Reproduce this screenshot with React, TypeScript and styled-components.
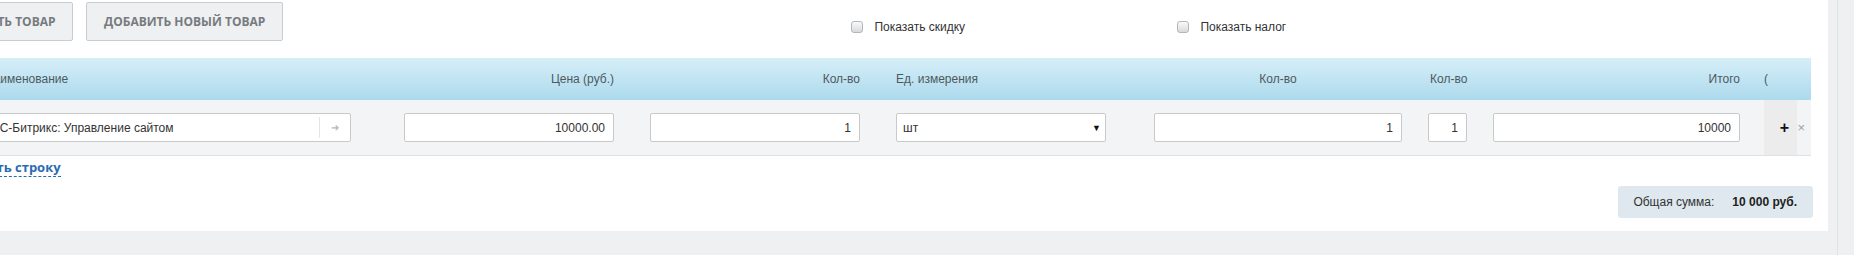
import React from "react";
import styled, { createGlobalStyle } from "styled-components";

const GlobalStyle = createGlobalStyle`
  html, body {
    margin: 0;
    padding: 0;
    background: #eef0f2;
    font-family: "Liberation Sans", Arial, sans-serif;
    font-size: 12px;
    color: #333;
    overflow: hidden;
  }
`;

// page is scrolled horizontally in the screenshot, so the table starts left of the viewport
const COLUMNS = "379px 263px 246px 246px 296px 65px 273px 71px";

const columns = [
  { title: "Наименование", align: "left", pad: 13 },
  { title: "Цена (руб.)", align: "right", pad: 53 },
  { title: "Кол-во", align: "right", pad: 36 },
  { title: "Ед. измерения", align: "left", pad: 36 },
  { title: "Кол-во", align: "center", pad: 48 },
  { title: "Кол-во", align: "left", pad: 28 },
  { title: "Итого", align: "right", pad: 26 },
  { title: "(", align: "left", pad: 24 },
];

const App = () => {
  return (
    <>
      <GlobalStyle />
      <Page>
        <Panel>
          <Inner>
            <TopBar>
              <Buttons>
                <GrayButton $width={136}>Выбрать товар</GrayButton>
                <GrayButton>Добавить новый товар</GrayButton>
              </Buttons>
              <Options>
                <Option $width={326}>
                  <Check type="checkbox" />
                  Показать скидку
                </Option>
                <Option>
                  <Check type="checkbox" />
                  Показать налог
                </Option>
              </Options>
            </TopBar>

            <Table>
              <HeadRow>
                {columns.map((c, i) => (
                  <HeadCell key={i} $align={c.align} $pad={c.pad}>
                    {c.title}
                  </HeadCell>
                ))}
              </HeadRow>

              <BodyRow>
                <Cell $pad={12}>
                  <NameBox>
                    <NameText>1С-Битрикс: Управление сайтом</NameText>
                    <NameArrow>➜</NameArrow>
                  </NameBox>
                </Cell>
                <Cell $pad={53}>
                  <Field value="10000.00" readOnly />
                </Cell>
                <Cell $pad={36}>
                  <Field value="1" readOnly />
                </Cell>
                <Cell $pad={36}>
                  <Select>
                    <span>шт</span>
                    <SelectArrow>▼</SelectArrow>
                  </Select>
                </Cell>
                <Cell $pad={48}>
                  <Field value="1" readOnly />
                </Cell>
                <Cell $pad={26}>
                  <Field value="1" readOnly />
                </Cell>
                <Cell $pad={26}>
                  <Field value="10000" readOnly />
                </Cell>
                <ActionCell>
                  <Actions>
                    <Plus>+</Plus>
                    <Remove>×</Remove>
                  </Actions>
                </ActionCell>
              </BodyRow>
            </Table>

            <AddRow>
              <AddLink>Добавить строку</AddLink>
            </AddRow>

            <TotalRow>
              <TotalBox>
                <span>Общая сумма:</span>
                <b>10 000 руб.</b>
              </TotalBox>
            </TotalRow>
          </Inner>
        </Panel>
        <SideStrip />
      </Page>
    </>
  );
};

export default App;

const Page = styled.div`
width: 1854px;
height: 255px;
display: flex;
align-items: flex-start;
`;

const Panel = styled.div`
width: 1828px;
background: #fff;
overflow: hidden;
padding: 2px 0 13px;
`;

const SideStrip = styled.div`
width: 26px;
height: 255px;
box-sizing: border-box;
border-left: 9px solid #eef0f2;
border-right: 16px solid #eef0f2;
background: #dfe3e6;
`;

const Inner = styled.div`
margin-left: -28px;
width: 1839px;
`;

const TopBar = styled.div`
display: flex;
align-items: flex-start;
height: 56px;
margin-left: -35px;
`;

const Buttons = styled.div`
display: flex;
gap: 13px;
`;

const GrayButton = styled.button<{ $width?: number }>`
height: 39px;
${(p) => (p.$width ? `width: ${p.$width}px;` : "")}
padding: 0 17px;
box-sizing: border-box;
background: #eef0f1;
border: 1px solid #c9cdd0;
border-radius: 2px;
font-family: "Open Sans", sans-serif;
font-weight: 700;
font-size: 12px;
color: #767b80;
text-transform: uppercase;
text-align: right;
white-space: nowrap;
`;

const Options = styled.div`
display: flex;
align-items: center;
margin-left: 568px;
padding-top: 17px;
`;

const Option = styled.label<{ $width?: number }>`
display: flex;
align-items: center;
gap: 11px;
${(p) => (p.$width ? `width: ${p.$width}px;` : "")}
font-size: 12px;
color: #333;
line-height: 16px;
`;

const Check = styled.input`
appearance: none;
margin: 0;
width: 12px;
height: 12px;
border: 1px solid #b3b7ba;
border-radius: 3px;
background: linear-gradient(#fafafa, #d9dadb);
`;

const Table = styled.div`
display: flex;
flex-direction: column;
`;

const HeadRow = styled.div`
display: grid;
grid-template-columns: ${COLUMNS};
height: 42px;
align-items: center;
background: linear-gradient(#d6eef8, #acdaed);
`;

const HeadCell = styled.div<{ $align: string; $pad: number }>`
padding-left: ${(p) => p.$pad}px;
text-align: ${(p) => p.$align};
font-size: 12px;
color: #4e595f;
white-space: nowrap;
`;

const BodyRow = styled.div`
display: grid;
grid-template-columns: ${COLUMNS};
height: 55px;
background: #f3f4f5;
border-bottom: 1px solid #dfe1e3;
`;

const Cell = styled.div<{ $pad: number }>`
display: flex;
align-items: center;
padding-left: ${(p) => p.$pad}px;
`;

const Field = styled.input`
width: 100%;
height: 29px;
box-sizing: border-box;
margin: 0;
border: 1px solid #c9c9c9;
border-radius: 2px;
background: #fff;
padding: 0 8px;
text-align: right;
font-family: "Liberation Sans", Arial, sans-serif;
font-size: 12px;
color: #333;
outline: none;
`;

const NameBox = styled.div`
flex: 1;
height: 29px;
box-sizing: border-box;
display: flex;
align-items: center;
border: 1px solid #c9c9c9;
border-radius: 2px;
background: #fff;
`;

const NameText = styled.span`
flex: 1;
padding-left: 8px;
font-size: 12px;
color: #333;
`;

const NameArrow = styled.span`
width: 30px;
height: 21px;
display: flex;
align-items: center;
justify-content: center;
border-left: 1px solid #e4e4e4;
font-size: 10px;
color: #b9b9b9;
`;

const Select = styled.div`
flex: 1;
height: 29px;
box-sizing: border-box;
display: flex;
align-items: center;
justify-content: space-between;
padding: 0 10px 0 6px;
border: 1px solid #c9c9c9;
border-radius: 2px;
background: #fff;
font-size: 12px;
color: #333;
`;

const SelectArrow = styled.span`
font-size: 9px;
color: #111;
margin-right: -6px;
`;

const ActionCell = styled.div`
padding-left: 24px;
padding-right: 14px;
display: flex;
`;

const Actions = styled.div`
flex: 1;
display: flex;
align-items: center;
justify-content: flex-end;
background: #ececec;
position: relative;
`;

const Plus = styled.span`
font-size: 16px;
font-weight: 700;
color: #111;
margin-right: 8px;
`;

const Remove = styled.span`
position: absolute;
right: -8px;
font-size: 13px;
color: #a0a0a0;
`;

const AddRow = styled.div`
padding-top: 3px;
margin-left: -27px;
height: 22px;
`;

const AddLink = styled.span`
font-family: "Open Sans", sans-serif;
font-weight: 700;
font-size: 13px;
line-height: 17px;
color: #2a6bb2;
border-bottom: 1px dashed #2a6bb2;
`;

const TotalRow = styled.div`
display: flex;
justify-content: flex-end;
margin-right: -2px;
margin-top: 5px;
`;

const TotalBox = styled.div`
height: 32px;
display: flex;
align-items: center;
gap: 18px;
padding: 0 16px 0 15px;
background: #dee8ee;
border-radius: 3px;
font-size: 12px;
color: #333;
b {
  color: #222;
}
`;
